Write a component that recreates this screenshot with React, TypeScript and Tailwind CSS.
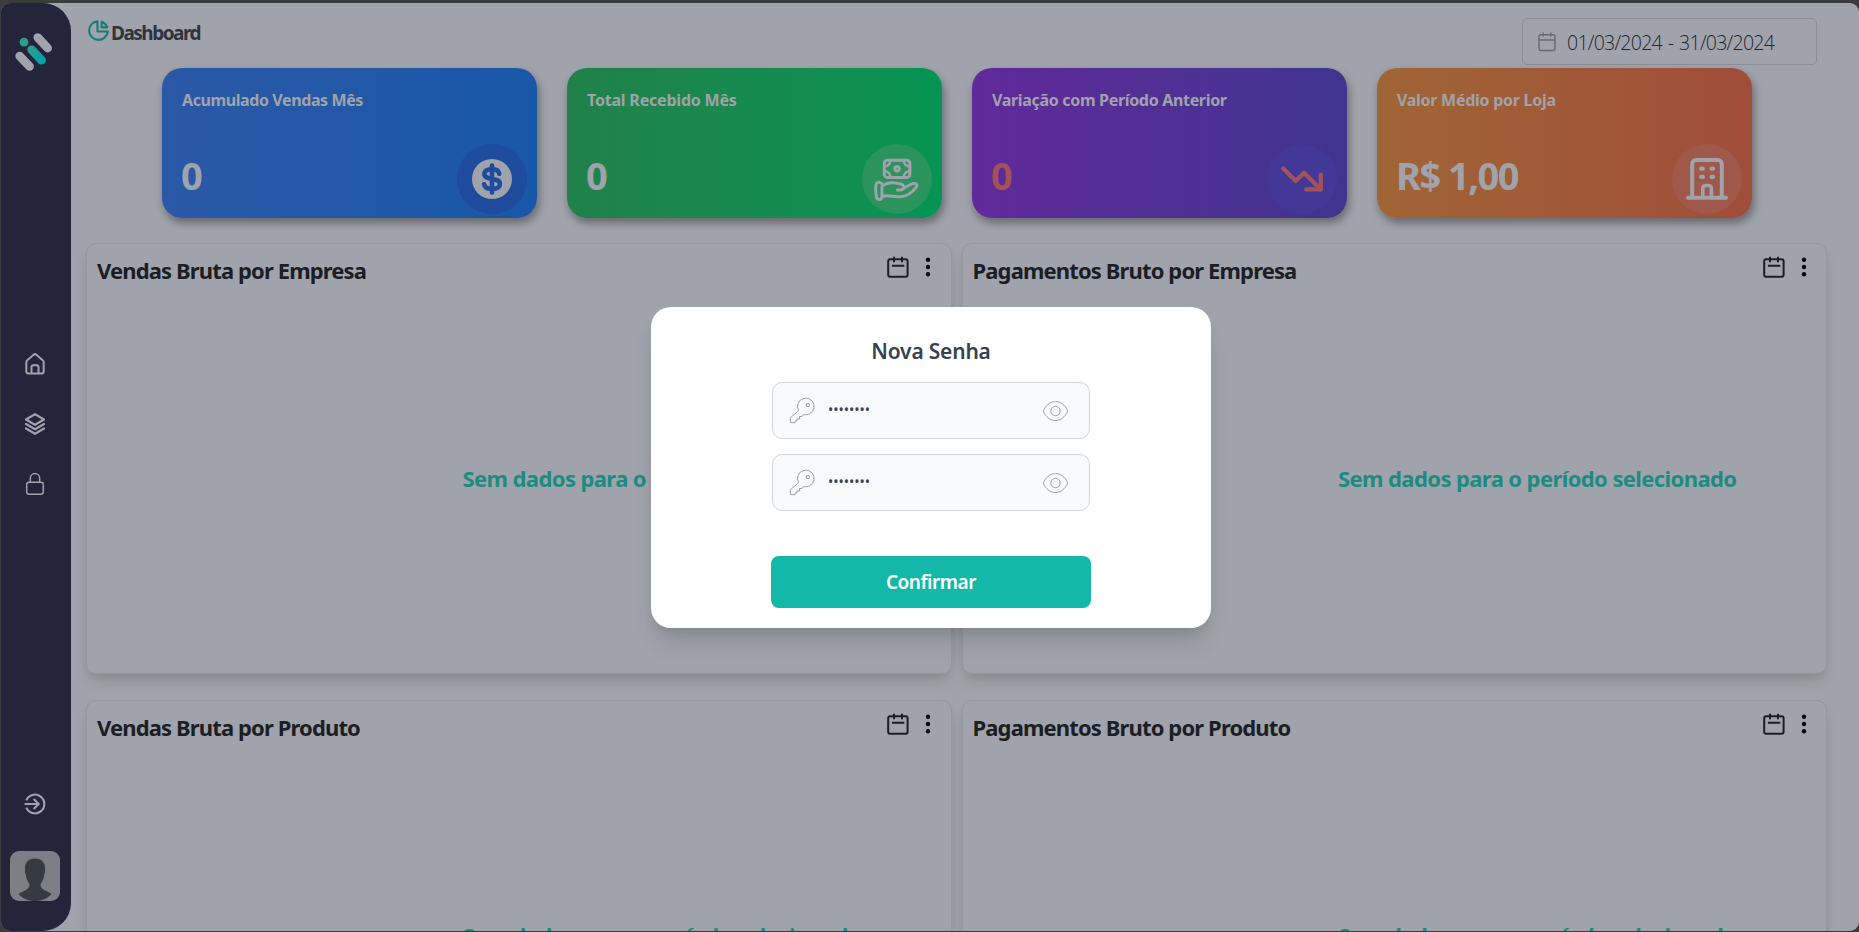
import React from "react";
import { HiOutlineChartPie } from "react-icons/hi";
import { PiStackBold } from "react-icons/pi";
import { TbTrendingDown } from "react-icons/tb";

function Logo() {
  return (
    <svg width="38" height="40" viewBox="0 0 38 40" fill="none" strokeWidth="8.6" strokeLinecap="round">
      <defs>
        <linearGradient id="teal" gradientUnits="userSpaceOnUse" x1="12" y1="12" x2="32" y2="32">
          <stop offset="0.2" stopColor="#2f9d8b" />
          <stop offset="0.8" stopColor="#02a2ad" />
        </linearGradient>
      </defs>
      <path d="M22.8 5.5L32.7 16.2M4.6 24L14.6 34.5" stroke="#a0a3ab" />
      <path d="M16.7 17.7L26.6 28.3" stroke="url(#teal)" />
      <circle cx="9" cy="10.2" r="4.4" fill="#2f9d8b" />
    </svg>
  );
}

function HomeIcon() {
  return (
    <svg width="20" height="22" viewBox="0 0 20 22" fill="none" stroke="currentColor" strokeWidth="2" strokeLinejoin="round">
      <path d="M1.3 9.2c0-.9.4-1.5 1-2L8.6 1.7c.8-.7 2-.7 2.8 0l6.3 5.5c.7.5 1 1.2 1 2v9.4c0 1-.8 1.8-1.8 1.8H3.1c-1 0-1.8-.8-1.8-1.8z" />
      <path d="M6.5 20v-6c0-1 .7-1.7 1.7-1.7h3.600c1 0 1.700.7 1.700 1.700v6" />
    </svg>
  );
}

function LockIcon() {
  return (
    <svg width="20" height="24" viewBox="0 0 20 24" fill="none" stroke="currentColor" strokeWidth="1.5">
      <rect x="1.7" y="10.2" width="16.6" height="12" rx="2.4" />
      <path d="M5.3 10V6.300a4.700 4.700 0 0 1 9.400 0V10" />
    </svg>
  );
}

function ExitIcon() {
  return (
    <svg width="22" height="22" viewBox="0 0 22 22" fill="none" stroke="currentColor" strokeWidth="2.1" strokeLinejoin="round">
      <path d="M2.3 7.3a9.4 9.4 0 1 1 0 7.4" />
      <path d="M.6 11H14M9.6 6l5.2 5-5.2 5" />
    </svg>
  );
}

function CalendarIcon() {
  return (
    <svg width="22" height="22" viewBox="0 0 22 22" fill="none" stroke="currentColor" strokeWidth="2">
      <rect x="1.2" y="3.2" width="19.4" height="17.6" rx="2" />
      <path d="M7 .8v5.500M15 .8v5.500M4.900 9.700h12.400" />
    </svg>
  );
}

function DateIcon() {
  return (
    <svg width="18" height="20" viewBox="0 0 18 20" fill="none" stroke="currentColor" strokeWidth="1.4">
      <rect x="1" y="2.7" width="16" height="15.8" rx="2" />
      <path d="M5.200.5v4M12.800.5v4M1 8h16" />
    </svg>
  );
}

function DollarIcon() {
  return (
    <svg width="70" height="70" viewBox="0 0 70 70" fill="none">
      <circle cx="35" cy="35" r="20" fill="#a0a3ab" />
      <path
        d="M35 21.500v27M42.300 29.800c-.5-3.200-3.300-4.700-7.300-4.700s-7.600 1.700-7.600 4.900c0 3.500 3.400 4.200 7.600 4.900s7.900 1.500 7.900 5.100c0 3.300-3.600 5-7.900 5s-7.400-1.500-7.900-4.800"
        stroke="#1e4b9c"
        strokeWidth="4.6"
        strokeLinecap="round"
      />
    </svg>
  );
}

function ReceiveIcon() {
  return (
    <svg width="70" height="70" viewBox="0 0 70 70" fill="none" stroke="#a0a3ab" strokeWidth="3" strokeLinecap="round" strokeLinejoin="round">
      <rect x="22.3" y="16.2" width="25.6" height="17.2" rx="3" />
      <circle cx="35.1" cy="24.8" r="2.2" />
      <path d="M23 22.500c3-.5 5-2.500 5.500-5.500M41.700 17c.5 3 2.500 5 5.500 5.500M23 27.100c3 .5 5 2.500 5.500 5.500M41.700 32.600c.5-3 2.500-5 5.500-5.500" strokeWidth="2.400" />
      <path d="M15.200 38.700c1.500-.8 4.600-.8 4.800 2v11.500c0 2-.8 3-2.200 3.300-1.900.3-3-.7-3.500-3-.8-4-.8-9-.2-12 .2-.9.5-1.400 1.100-1.800z" />
      <path d="M20.500 41.500c4-2.500 8-3.200 12.500-2.500 3.500.4 6.500.8 8 2.200 1.800 1.800.8 4-1.500 4.500-1.500.3-3 .3-4 .4M42.500 43.500c3-1 6-3.500 9-3.900 3-.3 4.200 1.200 3 3.200-4 5.500-9 9.500-16 9.900-6.500.2-12-2-18-.5" />
    </svg>
  );
}

function BuildingIcon() {
  return (
    <svg width="70" height="70" viewBox="0 0 70 70" fill="none" stroke="#a0a3ab" strokeWidth="4" strokeLinecap="round" strokeLinejoin="round">
      <path d="M16 53.700h38M20.200 53V20a4 4 0 0 1 4-4h21.600a4 4 0 0 1 4 4v33" />
      <path d="M30.800 53V44.500a3 3 0 0 1 3-3h2.600a3 3 0 0 1 3 3V53" strokeWidth="3.6" />
      <path d="M29.200 24.700h1.600M39.500 24.700h1.600M29.200 32.900h1.600M39.500 32.900h1.600" strokeWidth="4.2" />
    </svg>
  );
}

function KeyIcon() {
  return (
    <svg width="27" height="27" viewBox="0 0 27 27" fill="none" stroke="#9197a5" strokeWidth="0.9">
      <path d="M9.600 13.500A8.300 8.300 0 1 1 17.500 17.700h-3.200l-1.300 1.800h-2.500v2.500H7.800v2H6v1.700H1.400v-5l8.200-7z" />
      <rect x="17.3" y="6.5" width="3" height="3" rx="0.5" />
    </svg>
  );
}

function EyeIcon() {
  return (
    <svg width="27" height="22" viewBox="0 0 27 22" fill="none" stroke="#9197a5" strokeWidth="0.9">
      <path d="M1.200 11C4 5 8.200 1.500 13.500 1.500S23 5 25.800 11C23 17 18.800 20.500 13.500 20.500S4 17 1.200 11z" />
      <circle cx="13.5" cy="11" r="4.7" />
    </svg>
  );
}

const cards = [
  {
    title: "Acumulado Vendas Mês",
    titleStyle: "tracking-[-0.4px]",
    value: "0",
    valueStyle: "text-[#a0a3ab]",
    background: "from-[#2a59a6] to-[#1857a8]",
    circle: "bg-[#1e4b9c]",
    icon: <DollarIcon />,
  },
  {
    title: "Total Recebido Mês",
    titleStyle: "tracking-[-0.2px]",
    value: "0",
    valueStyle: "text-[#a0a3ab]",
    background: "from-[#20814a] to-[#059453]",
    circle: "bg-[#2b935e]",
    icon: <ReceiveIcon />,
  },
  {
    title: "Variação com Período Anterior",
    titleStyle: "tracking-[-0.32px]",
    value: "0",
    valueStyle: "text-[#a35358]",
    background: "from-[#61299b] to-[#3f348f]",
    circle: "bg-[#433797]",
    icon: <TbTrendingDown size={50} color="#a35358" />,
  },
  {
    title: "Valor Médio por Loja",
    titleStyle: "tracking-[-0.27px]",
    value: "R$ 1,00",
    valueStyle: "text-[#a0a3ab]",
    background: "from-[#a06535] to-[#a04d3a]",
    circle: "bg-[#9f5849]",
    icon: <BuildingIcon />,
  },
];

const panels = [
  "Vendas Bruta por Empresa",
  "Pagamentos Bruto por Empresa",
  "Vendas Bruta por Produto",
  "Pagamentos Bruto por Produto",
];

function Sidebar() {
  return (
    <aside className="flex h-full w-[70px] shrink-0 flex-col items-center rounded-r-[28px] bg-[#24243a] pr-[3px] text-[#a0a3ab]">
      <div className="mt-[29px] mr-px">
        <Logo />
      </div>
      <nav className="mt-[281px] flex flex-col items-center">
        <HomeIcon />
        <PiStackBold size={24} className="mt-[37px]" />
        <div className="mt-[36px]">
          <LockIcon />
        </div>
      </nav>
      <div className="mt-[297px]">
        <ExitIcon />
      </div>
      <div className="mt-auto mb-[30px] size-[50px] overflow-hidden rounded-[9px] bg-[#7c7f86]">
        <svg width="50" height="50" viewBox="0 0 50 50" fill="#363a42">
          <path d="M25 7.500c-6.500 0-10.200 4-10 10 0 2-.4 4 .6 5.500.6 5 2 7.500 3.900 10 .3 3-1.500 5-4.500 6.500-3 1.300-4.500 2-6.500 3.500 4 4.500 10 7 16.500 7s12.500-2.500 16.500-7c-2-1.500-3.500-2.200-6.500-3.500-3-1.500-4.800-3.500-4.500-6.500 1.900-2.500 3.300-5 3.900-10 1-1.500.6-3.500.6-5.500.2-6-3.500-10-10-10z" />
        </svg>
      </div>
    </aside>
  );
}

function Panel({ title }: { title: string }) {
  return (
    <section className="flex h-[431px] flex-col rounded-[10px] border border-[#94979f] bg-[#a0a3ab] shadow-[0_10px_15px_-3px_rgba(0,0,0,0.12),0_4px_8px_-2px_rgba(0,0,0,0.06)]">
      <div className="flex justify-between pt-[11px] pr-[16.5px] pl-[10px]">
        <h2 className="text-[22px] leading-[30px] font-bold tracking-[-0.87px] whitespace-nowrap text-[#1b1e24]">
          {title}
        </h2>
        <div className="flex h-[24px] items-center gap-[13px] text-[#1b1e24]">
          <CalendarIcon />
          <svg width="12" height="20" viewBox="0 0 12 20" fill="#060910">
            <circle cx="6" cy="2.8" r="2.2" />
            <circle cx="6" cy="10" r="2.2" />
            <circle cx="6" cy="17.2" r="2.2" />
          </svg>
        </div>
      </div>
      <p className="mt-[178px] pl-[286px] text-center text-[22px] leading-[30px] font-bold tracking-[-0.6px] whitespace-nowrap text-[#1c8c80]">
        Sem dados para o período selecionado
      </p>
    </section>
  );
}

function PasswordField() {
  return (
    <div className="flex h-[57px] w-[318px] items-center rounded-[10px] border border-[#d1d5db] bg-[#f9fafb] pr-[20px] pl-[16px]">
      <KeyIcon />
      <span className="mt-[-2px] ml-[12px] flex-1 text-[14px] leading-5 text-[#374151]">••••••••</span>
      <EyeIcon />
    </div>
  );
}

export default function App() {
  return (
    <div className="h-[932px] w-full overflow-hidden bg-[#3b3b3b] pt-[3px] pl-px font-['Noto_Sans',sans-serif]">
      <div className="relative flex h-[928px] overflow-hidden rounded-[9px] bg-[#a0a3ab]">
        <Sidebar />
        <main className="flex-1 overflow-hidden pr-[32px] pl-[15px]">
          <header className="flex h-[65px] items-start justify-between pr-[10px]">
            <div className="mt-[15px] flex items-start">
              <HiOutlineChartPie size={25} color="#157d76" />
              <h1 className="mt-[2px] text-[19px] leading-[26px] font-bold tracking-[-1.5px] text-[#2f333c]">
                Dashboard
              </h1>
            </div>
            <div className="mt-[15px] flex h-[47px] w-[295px] items-center rounded-[5px] border border-[#8b8e96] pl-[15px] text-[#656973]">
              <DateIcon />
              <span className="mt-[2px] ml-[11px] font-['Open_Sans',sans-serif] text-[19.5px] font-light tracking-[-0.74px] whitespace-nowrap text-[#20252e] [word-spacing:1.5px]">
                01/03/2024 - 31/03/2024
              </span>
            </div>
          </header>

          <div className="flex gap-[30px] pl-[76px]">
            {cards.map((card) => (
              <div
                key={card.title}
                className={`flex h-[150px] w-[375px] shrink-0 flex-col justify-between rounded-[20px] bg-linear-to-r shadow-[2px_5px_9px_rgba(0,0,0,0.36)] ${card.background}`}
              >
                <h3
                  className={`mt-[20px] ml-[20px] text-[16px] leading-[24px] font-bold whitespace-nowrap text-[#a0a3ab] ${card.titleStyle}`}
                >
                  {card.title}
                </h3>
                <div className="mb-[4px] flex items-center justify-between pr-[10px] pl-[19px]">
                  <span className={`mb-[8px] text-[38px] leading-[40px] font-bold tracking-[-1.5px] ${card.valueStyle}`}>
                    {card.value}
                  </span>
                  <div className={`flex size-[70px] items-center justify-center rounded-full ${card.circle}`}>
                    {card.icon}
                  </div>
                </div>
              </div>
            ))}
          </div>

          <div className="mt-[25px] grid grid-cols-2 gap-x-[10px] gap-y-[26px]">
            {panels.map((title) => (
              <Panel key={title} title={title} />
            ))}
          </div>
        </main>

        {/* password modal */}
        <div className="absolute inset-0 flex items-start justify-center pt-[304px] pl-[2px]">
          <div className="flex h-[321px] w-[560px] flex-col items-center rounded-[20px] bg-white shadow-[0_20px_25px_-5px_rgba(0,0,0,0.1),0_8px_14px_-4px_rgba(0,0,0,0.1)]">
            <h2 className="mt-[29px] mb-[16px] text-[21px] leading-[30px] font-semibold tracking-[-0.2px] text-[#374151]">
              Nova Senha
            </h2>
            <PasswordField />
            <div className="h-[15px]" />
            <PasswordField />
            <button className="mt-[45px] h-[52px] w-[320px] rounded-[8px] bg-[#14b8a8] text-[19px] font-semibold tracking-[-0.45px] text-white">
              Confirmar
            </button>
          </div>
        </div>
      </div>
    </div>
  );
}
